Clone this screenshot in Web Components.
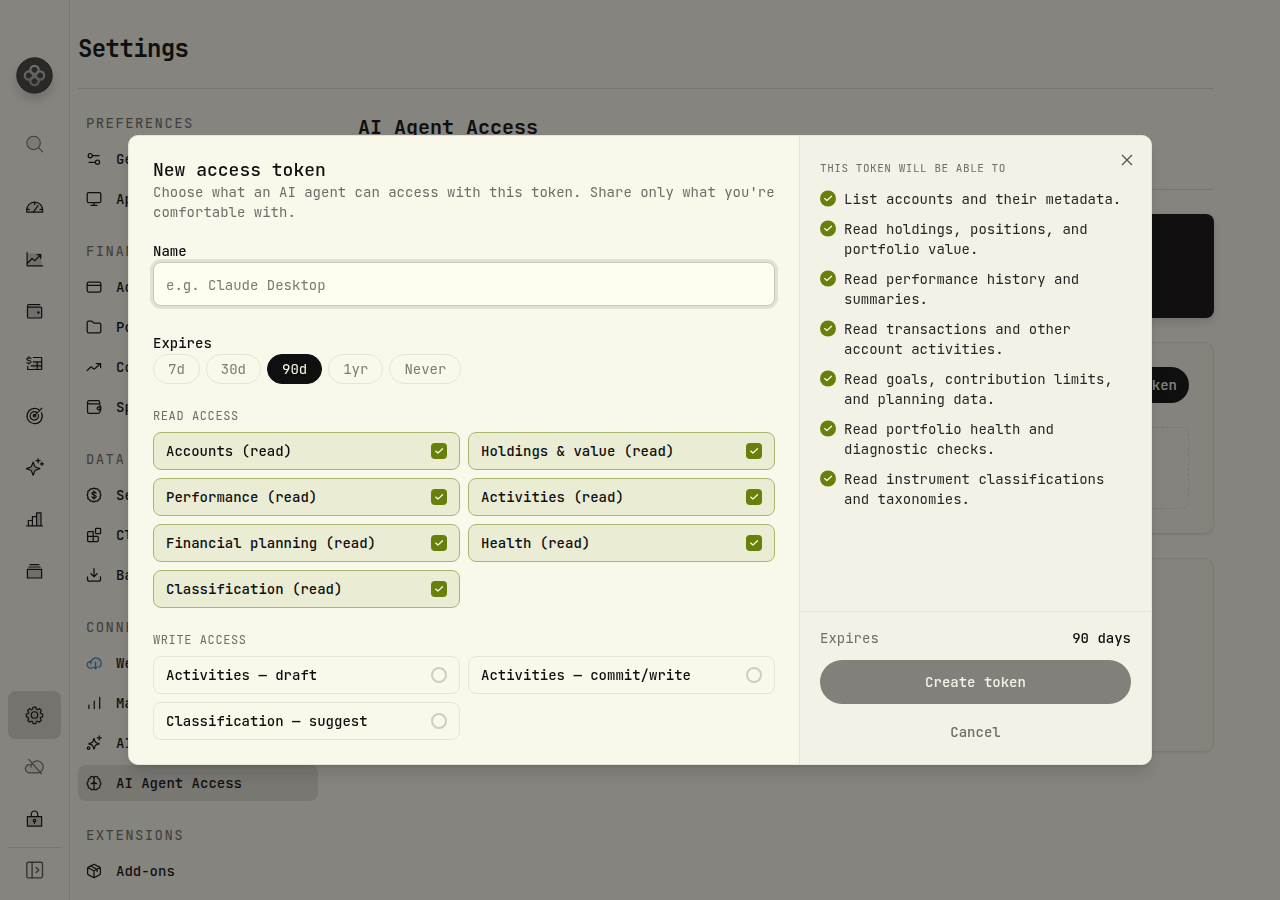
<!DOCTYPE html>
<html lang="en">
<head>
<meta charset="utf-8">
<title>Settings - AI Agent Access</title>
<style>
  :root {
    --page: #fbf8ef;
    --bg: #faf8eb;
    --panel: #f4f1e6;
    --input: #fffdf0;
    --ink: #100f0f;
    --muted: #6f6e69;
    --line: #e6e4d9;
    --green: #66800b;
  }

  html, body {
    margin: 0;
    height: 100%;
    overflow: hidden;
  }

  body {
    background: var(--page);
    color: var(--ink);
    font-family: "JetBrains Mono", "DejaVu Sans Mono", monospace;
    font-size: 14px;
    line-height: 20px;
  }
</style>
</head>
<body>
<settings-app></settings-app>

<template id="tpl-app">
  <style>
    :host { display: block; height: 100vh; }
    .shell { display: flex; height: 100%; }
    main { flex: 1; padding: 0 66px 0 8px; min-width: 0; }
    header { height: 88px; border-bottom: 1px solid #dcdacf; display: flex; align-items: center; }
    h1 { margin: 10px 0 0; font-size: 24px; line-height: 32px; font-weight: 600; letter-spacing: -0.6px; }
    .cols { display: flex; gap: 40px; padding-top: 24px; }
    section { flex: 1; display: flex; flex-direction: column; gap: 24px; }
    .head { height: 76px; border-bottom: 1px solid #dcdacf; }
    h2 { margin: 0; font-size: 20px; line-height: 28px; font-weight: 600; }
    .hero { height: 104px; border-radius: 8px; background: #120f10; box-shadow: 0 4px 8px rgba(16, 15, 15, .14); }
    .card {
      box-sizing: border-box; border: 1px solid #e4e1d6; border-radius: 10px; padding: 24px;
      background: linear-gradient(90deg, #fbf8ef 92%, #fbf5e9 100%);
      box-shadow: 0 1px 2px rgba(16, 15, 15, .1);
      display: flex; flex-direction: column; gap: 24px;
    }
    .tokens { height: 192px; }
    .clients { height: 194px; }
    .new {
      align-self: flex-end; height: 36px; border: 0; border-radius: 18px; padding: 0 12px; background: var(--ink);
      color: var(--bg); font: inherit; font-weight: 500; flex: none;
    }
    .empty { box-sizing: border-box; height: 82px; border: 1px dashed #dfdcd2; border-radius: 8px; }
  </style>
  <div class="shell">
    <app-rail></app-rail>
    <main>
      <header><h1>Settings</h1></header>
      <div class="cols">
        <settings-nav></settings-nav>
        <section>
          <div class="head"><h2>AI Agent Access</h2></div>
          <div class="hero"></div>
          <div class="card tokens">
            <button class="new">New token</button>
            <div class="empty"></div>
          </div>
          <div class="card clients"></div>
        </section>
      </div>
    </main>
  </div>
  <token-dialog></token-dialog>
</template>

<template id="tpl-rail">
  <style>
    :host {
      box-sizing: border-box; width: 70px; border-right: 1px solid #e0ded3; padding: 57px 8px 8px;
      display: flex; flex-direction: column; align-items: stretch;
    }
    .logo { height: 37px; width: 37px; align-self: center; border-radius: 50%; box-shadow: 0 6px 10px rgba(16, 15, 15, .16); }
    .logo svg { display: block; }
    .btn { height: 48px; display: flex; align-items: center; justify-content: center; border-radius: 8px; flex: none; }
    .search { margin-top: 26px; color: #6f6e69; }
    .list { display: flex; flex-direction: column; gap: 4px; margin-top: 16px; }
    .bottom { display: flex; flex-direction: column; gap: 4px; margin-top: auto; }
    .active { background: #d9d6cc; }
    .dim { color: #6f6e69; }
    .last { border-top: 1px solid #dad7cd; border-radius: 0; height: 44px; color: #5a5954; }
    ui-icon { transform: translateX(-.5px); }
    .list ui-icon { transform: translate(-.5px, -.5px); }
  </style>
  <div class="logo">
    <svg width="37" height="37" viewBox="0 0 37 37">
      <defs><linearGradient id="g" x1="0" y1="0" x2="0" y2="37" gradientUnits="userSpaceOnUse">
        <stop offset=".2" stop-color="#cfcfd3"/><stop offset=".8" stop-color="#99999c"/>
      </linearGradient></defs>
      <circle cx="18.5" cy="18.5" r="17.7" fill="#47433a" stroke="#302e28"/>
      <g fill="none" stroke="url(#g)" stroke-width="2.3">
        <circle cx="18.5" cy="13" r="4.2"/><circle cx="18.5" cy="24" r="4.2"/>
        <circle cx="13" cy="18.5" r="4.2"/><circle cx="24" cy="18.5" r="4.2"/>
      </g>
    </svg>
  </div>
  <div class="btn search"><ui-icon name="search" size="20"></ui-icon></div>
  <div class="list">
    <div class="btn"><ui-icon name="gauge" size="20"></ui-icon></div>
    <div class="btn"><ui-icon name="chart" size="20"></ui-icon></div>
    <div class="btn"><ui-icon name="wallet" size="20"></ui-icon></div>
    <div class="btn"><ui-icon name="invoice" size="20"></ui-icon></div>
    <div class="btn"><ui-icon name="target" size="20"></ui-icon></div>
    <div class="btn"><ui-icon name="sparkle" size="20"></ui-icon></div>
    <div class="btn"><ui-icon name="bars" size="20"></ui-icon></div>
    <div class="btn"><ui-icon name="stack" size="20"></ui-icon></div>
  </div>
  <div class="bottom">
    <div class="btn active"><ui-icon name="gear" size="20"></ui-icon></div>
    <div class="btn dim"><ui-icon name="cloudoff" size="20"></ui-icon></div>
    <div class="btn"><ui-icon name="lock" size="20"></ui-icon></div>
    <div class="btn last"><ui-icon name="panel" size="20"></ui-icon></div>
  </div>
</template>

<template id="tpl-nav">
  <style>
    :host { display: flex; flex-direction: column; gap: 24px; width: 240px; flex: none; }
  </style>
  <nav-group heading="PREFERENCES">
    <nav-item icon="sliders">General</nav-item>
    <nav-item icon="monitor">Appearance</nav-item>
  </nav-group>
  <nav-group heading="FINANCES">
    <nav-item icon="card">Accounts</nav-item>
    <nav-item icon="folder">Portfolios</nav-item>
    <nav-item icon="trend">Contributions</nav-item>
    <nav-item icon="purse">Spending</nav-item>
  </nav-group>
  <nav-group heading="DATA">
    <nav-item icon="coin">Securities</nav-item>
    <nav-item icon="blocks">Classifications</nav-item>
    <nav-item icon="download">Backup</nav-item>
  </nav-group>
  <nav-group heading="CONNECTIONS">
    <nav-item icon="clouddown">Wealthfolio</nav-item>
    <nav-item icon="signal">Market Data</nav-item>
    <nav-item icon="ai">AI Providers</nav-item>
    <nav-item icon="brain" active>AI Agent Access</nav-item>
  </nav-group>
  <nav-group heading="EXTENSIONS">
    <nav-item icon="box">Add-ons</nav-item>
  </nav-group>
</template>

<template id="tpl-dialog">
  <style>
    :host {
      position: fixed; inset: 0; background: rgba(16, 15, 15, .5);
      display: flex; align-items: center; justify-content: center;
    }
    .modal {
      box-sizing: border-box; width: 1024px; height: 630px; border: 1px solid var(--line); border-radius: 10px;
      background: var(--bg); overflow: hidden; display: flex;
      position: relative;
      box-shadow: 0 10px 15px -3px rgba(16, 15, 15, .13), 0 4px 6px -4px rgba(16, 15, 15, .13);
    }
    .form { box-sizing: border-box; width: 670px; padding: 25px 24px 24px; display: flex; flex-direction: column; }
    h2 { margin: 0; font-size: 18px; line-height: 18px; font-weight: 500; }
    .desc { margin: 3px 0 0; color: var(--muted); }
    label { margin-top: 19px; font-weight: 500; }
    input {
      box-sizing: border-box; height: 44px; margin-top: 1px; padding: 2px 12px 0; border: 1px solid #c9c7bc;
      border-radius: 8px; background: var(--input); font: inherit; color: var(--ink);
      outline: none; box-shadow: 0 0 0 3px #e2e1d5;
    }
    input::placeholder { color: #7b7a74; opacity: 1; }
    label.exp { margin-top: 27px; }
    .pills { display: flex; gap: 6px; margin-top: 1px; }
    h3 { margin: 24px 0 8px; font-size: 12px; line-height: 16px; font-weight: 400; letter-spacing: 0.6px; color: var(--muted); }
    .grid { display: grid; grid-template-columns: 1fr 1fr; gap: 8px; }
    aside {
      flex: 1; border-left: 1px solid var(--line); background: var(--panel);
      display: flex; flex-direction: column;
    }
    .can { flex: 1; padding: 24px 20px 0; display: flex; flex-direction: column; gap: 10px; }
    .can h4 { margin: 0 0 2px; font-size: 11px; line-height: 17px; font-weight: 400; letter-spacing: 0.55px; color: var(--muted); }
    footer { border-top: 1px solid var(--line); padding: 16px 20px 12px; display: flex; flex-direction: column; }
    .row { display: flex; justify-content: space-between; color: var(--muted); }
    .row b { font-weight: 500; color: var(--ink); }
    button { border: 0; font: inherit; font-weight: 500; }
    .create { margin-top: 12px; height: 44px; border-radius: 22px; background: #82807a; color: var(--panel); }
    .cancel { margin-top: 8px; height: 40px; background: none; color: var(--muted); }
    .close { position: absolute; top: 16px; right: 16px; color: #55544f; display: flex; }
  </style>
  <div class="modal" role="dialog">
    <div class="form">
      <h2>New access token</h2>
      <p class="desc">Choose what an AI agent can access with this token. Share only what you're comfortable with.</p>
      <label>Name</label>
      <input type="text" placeholder="e.g. Claude Desktop">
      <label class="exp">Expires</label>
      <div class="pills">
        <expiry-pill>7d</expiry-pill>
        <expiry-pill>30d</expiry-pill>
        <expiry-pill selected>90d</expiry-pill>
        <expiry-pill>1yr</expiry-pill>
        <expiry-pill>Never</expiry-pill>
      </div>
      <h3>READ ACCESS</h3>
      <div class="grid">
        <scope-option checked>Accounts (read)</scope-option>
        <scope-option checked>Holdings &amp; value (read)</scope-option>
        <scope-option checked>Performance (read)</scope-option>
        <scope-option checked>Activities (read)</scope-option>
        <scope-option checked>Financial planning (read)</scope-option>
        <scope-option checked>Health (read)</scope-option>
        <scope-option checked>Classification (read)</scope-option>
      </div>
      <h3>WRITE ACCESS</h3>
      <div class="grid">
        <scope-option>Activities — draft</scope-option>
        <scope-option>Activities — commit/write</scope-option>
        <scope-option>Classification — suggest</scope-option>
      </div>
    </div>
    <aside>
      <div class="can">
        <h4>THIS TOKEN WILL BE ABLE TO</h4>
        <ability-item>List accounts and their metadata.</ability-item>
        <ability-item>Read holdings, positions, and portfolio value.</ability-item>
        <ability-item>Read performance history and summaries.</ability-item>
        <ability-item>Read transactions and other account activities.</ability-item>
        <ability-item>Read goals, contribution limits, and planning data.</ability-item>
        <ability-item>Read portfolio health and diagnostic checks.</ability-item>
        <ability-item>Read instrument classifications and taxonomies.</ability-item>
      </div>
      <footer>
        <div class="row"><span>Expires</span><b>90 days</b></div>
        <button class="create">Create token</button>
        <button class="cancel">Cancel</button>
      </footer>
    </aside>
    <span class="close"><ui-icon name="close" size="16"></ui-icon></span>
  </div>
</template>

<script>
// 20px icons: thin two-tone strokes. 16px icons: plain strokes.
const ICONS = {
  search: `<g stroke-width="1.1"><circle cx="9.1" cy="8.9" r="6.7" fill="currentColor" fill-opacity=".14"/><path d="M13.9 13.7l4.2 4.2"/></g>`,
  gauge: `<path d="M2.2 14.6v-2a8 8 0 0 1 16 0v2z" fill="currentColor" fill-opacity=".1"/><path d="M9 14.4l4.6-6.2M10.2 4.6v2.6M2.6 11.6l2.3.6M17.8 11.6l-2.3.6"/>`,
  chart: `<path d="M3 4h14v12H3z" fill="currentColor" fill-opacity=".18" stroke="none"/><path d="M2.6 3v13.4H18M3.2 13.5L7.6 9l2.8 2.2L16 5.4M12.6 5.2h3.6v3.6"/>`,
  wallet: `<path d="M3 5.2h13.4c.5 0 .8.3.8.8v10c0 .5-.3.8-.8.8H3.8c-.5 0-.8-.3-.8-.8z" fill="currentColor" fill-opacity=".18" stroke="none"/><path d="M15.2 3.2H4.4c-.8 0-1.4.5-1.4 1.3v10.7c0 .8.5 1.3 1.3 1.3h11.9c.6 0 1-.4 1-1V6.7c0-.6-.4-1-1-1H4.3C3.5 5.7 3 5.3 3 4.5"/><circle cx="13.9" cy="11" r=".6" fill="currentColor"/>`,
  invoice: `<path d="M8 9h9v7H8z" fill="currentColor" fill-opacity=".12" stroke="none"/><path d="M8.8 4h8.4v12H3.2v-3.2M6.6 12.4h10.6M8.8 8.4h8.4M12.7 8.4V16M6.4 4.9C5.8 4.1 2.4 3.9 2.4 5.7c0 1.7 4.2.9 4.2 2.6 0 1.6-3.4 1.6-4.3.8M4.5 3.2v.9M4.5 9.6v.9"/>`,
  target: `<path d="M14.6 4.4a7.6 7.6 0 1 0 2.4 2.9M12.2 6.9a4.2 4.2 0 1 0 1.6 2.2"/><circle cx="10" cy="10.2" r="1.3"/><path d="M10 10.2L17.5 2.7"/>`,
  sparkle: `<path d="M8.6 4.6l1.7 4.1c.2.4.4.6.8.8l4.3 1.6-4.3 1.7c-.4.2-.6.4-.8.8l-1.7 4.2-1.6-4.2c-.2-.4-.4-.6-.8-.8L1.9 11.1l4.3-1.6c.4-.2.6-.4.8-.8z" fill="currentColor" fill-opacity=".15"/><path d="M13.6 1.2v4M11.6 3.2h4M17.4 4.9v3M15.9 6.4h3"/>`,
  bars: `<path d="M2.3 16.4h15.6M3.9 16.4v-5.4h4M7.9 16.4V7.2h4.2M12.1 16.4V3.3h4.4v13.1"/><path d="M12.1 3.3h4.4v13h-4.4z" fill="currentColor" fill-opacity=".18" stroke="none"/>`,
  stack: `<path d="M2.9 7.8h14.2v8.7H2.9z" fill="currentColor" fill-opacity=".18"/><path d="M4.3 5.5h11.4M5.5 3.2h9"/>`,
  gear: `<g transform="translate(10 10) scale(.96) translate(-10 -10)"><path d="M8.5 2.4h3l.5 2 1.3.6 1.9-1.1 2 2.1-1 1.8.5 1.3 1.8.6v2.8l-1.9.5-.5 1.3 1 1.8-2 2-1.9-1-1.3.6-.5 1.9h-2.9l-.5-1.9-1.3-.6-1.9 1-2-2 1-1.8-.5-1.3-1.8-.5V9.7l1.9-.6.5-1.3-1.1-1.8 2-2.1L6.7 5 8 4.4z" transform="translate(0 -.6)" fill="currentColor" fill-opacity=".12"/><circle cx="10" cy="10" r="3.4"/></g>`,
  cloudoff: `<g stroke-width="1.2"><path d="M6.9 8.3a6 6 0 1 1 5.6 7.6H5.3a4.2 4.2 0 1 1 1.8-7.9" fill="currentColor" fill-opacity=".08"/><path d="M6.5 10.2V8.6M4.3 2.3l12.7 14.5"/></g>`,
  lock: `<path d="M2.9 7.700h14.200v9.500H2.900z" fill="currentColor" fill-opacity=".18"/><path d="M6.800 7.500V5.200a3.200 3.200 0 0 1 6.400 0v2.300M10 12.800v1.800"/><circle cx="10" cy="11.600" r="1.300"/>`,
  panel: `<rect x="2.3" y="2.2" width="15.7" height="15.7" rx="1.7" stroke-width="1.4"/><path d="M7.600 2.200v15.700M11.600 7.500l2.700 2.500-2.700 2.500" stroke-width="1.4"/>`,
  close: `<path d="M3.300 3.300l9.400 9.400M12.700 3.300l-9.400 9.400"/>`,
  sliders: `<circle cx="4.3" cy="4.7" r="2.1"/><path d="M6.4 4.7H13M3 11.3h6.4"/><circle cx="11.5" cy="11.3" r="2.1"/>`,
  monitor: `<rect x="1.2" y="1.7" width="13.6" height="10" rx="1.5"/><path d="M8 11.7v2.6M5 14.4h6"/>`,
  card: `<rect x="1.2" y="3" width="13.6" height="10" rx="1.6"/><path d="M1.2 6.4h13.6"/>`,
  folder: `<path d="M1.2 12.4V3.6c0-.9.5-1.5 1.4-1.5h2.8c1.5 0 1.5 2 3 2h5c.9 0 1.4.6 1.4 1.5v6.8c0 .9-.5 1.5-1.4 1.5H2.6c-.9 0-1.4-.6-1.4-1.5z"/>`,
  trend: `<path d="M1.2 11.5l3-3c.7-.7 1.2-.7 1.9 0l1 1c.7.7 1.2.7 1.9 0L14.3 4.7M10.3 4.5h4.3v4.2"/>`,
  purse: `<path d="M13.6 5.3V3.1c0-.8-.5-1.4-1.3-1.4H3.3c-1.1 0-1.8.6-1.8 1.5 0 1.1.8 1.7 1.9 1.7h9c1.2 0 1.700.6 1.700 1.500v6.200c0 1.100-.6 1.700-1.700 1.700H3.500c-1.300 0-2-.7-2-1.900V3.300"/><path d="M14.800 7.900h-2.200a1.500 1.500 0 0 0 0 3h2.200z" fill="currentColor" fill-opacity=".2"/>`,
  coin: `<path d="M8 1.1l1.7.8 1.9-.1 1 1.6 1.6 1-.1 1.9.8 1.7-.8 1.7.1 1.9-1.6 1-1 1.6-1.9-.1-1.7.8-1.7-.8-1.9.1-1-1.6-1.6-1 .1-1.9L1.100 8l.8-1.700-.1-1.900 1.600-1 1-1.600 1.900.1z"/><path d="M10.100 6.200C9.700 4.900 5.900 4.700 5.900 6.500c0 2 4.300 1 4.300 3.100 0 1.900-3.900 1.800-4.300.2M8 3.900v8.200"/>`,
  blocks: `<path d="M1.600 5.600c0-.7.3-1 1-1h4.600v10H2.600c-.7 0-1-.3-1-1zM1.600 9.400h9.700c.7 0 1 .3 1 1v3.200c0 .7-.3 1-1 1H7.200"/><rect x="9.5" y="1.4" width="5.1" height="5.1" rx=".8"/>`,
  download: `<path d="M8 1.6v7.8M5 6.7l3 3 3-3M1.5 9.900v2.300c0 1.300.7 2 2 2h9c1.300 0 2-.7 2-2V9.900"/>`,
  clouddown: `<path d="M6.600 13.100H4.200a3.300 3.300 0 1 1 1-6.500M4.900 8.800a5.200 5.200 0 1 1 8.300 3.500" fill="#4385be" fill-opacity=".1"/><path d="M9.500 7v6.800M7.500 11.900l2 2 2-2"/>`,
  signal: `<path d="M2.900 10.200v3.300M8.300 6.100v7.400M13.700 2.300v11.200"/>`,
  ai: `<path d="M8 3.500l1.100 3c.2.600.6 1 1.200 1.200l2.900 1.100-2.900 1.100c-.6.200-1 .6-1.200 1.200L8 14.100l-1.100-3c-.2-.6-.6-1-1.200-1.200L2.800 8.800l2.900-1.100c.6-.2 1-.6 1.200-1.200zM13.300.9v4M11.300 2.900h4"/><circle cx="2.600" cy="13.100" r="1.300"/>`,
  brain: `<path d="M8 3v10.400M8 3.300C7.500.6 4 .9 4 3.400 2.300 3.800 1.700 5.300 2.300 6.700.7 7.400.7 9.400 2.200 10.300c-.4 1.800.5 3.100 2.200 3.100.6 2 3.200 1.900 3.600 0M8 3.300c.5-2.700 4-2.400 4 .1 1.700.4 2.300 1.900 1.700 3.300 1.600.7 1.600 2.700.1 3.600.4 1.800-.5 3.100-2.200 3.100-.6 2-3.200 1.900-3.600 0M5.300 8.700C6.800 8.600 7.700 7.800 8 6.300M10.700 8.700C9.200 8.600 8.300 7.800 8 6.300"/>`,
  box: `<path d="M8 1.200l5.500 2.900c.6.300.9.700.9 1.300v5.200c0 .6-.3 1-.9 1.300L8 14.800l-5.500-2.900c-.6-.3-.9-.7-.9-1.300V5.400c0-.6.300-1 .9-1.300zM1.900 4.700L8 7.800l6.100-3.100M8 7.800v6.900M4.700 3l6.400 3.300v2.300"/>`,
};

const CHECK = `<svg width="16" height="16" viewBox="0 0 16 16"><path d="M4.700 8.100l2.200 2 4.600-4.300" fill="none" stroke="#fffcf0" stroke-width="1.300" stroke-linecap="round" stroke-linejoin="round"/></svg>`;

class BaseElement extends HTMLElement {
  constructor() {
    super();
    this.attachShadow({ mode: "open" });
  }

  connectedCallback() {
    this.render();
  }
}

function fromTemplate(id) {
  return class extends BaseElement {
    render() {
      const template = document.getElementById(id);
      this.shadowRoot.replaceChildren(template.content.cloneNode(true));
    }
  };
}

class UiIcon extends BaseElement {
  render() {
    const size = this.getAttribute("size") || "16";
    const width = size === "20" ? 1.2 : 1.25;
    this.shadowRoot.innerHTML = `
      <style>
        :host { display: block; flex: none; width: ${size}px; height: ${size}px; }
        svg { display: block; overflow: visible; }
      </style>
      <svg width="${size}" height="${size}" viewBox="0 0 ${size} ${size}" fill="none" stroke="currentColor"
        stroke-width="${width}" stroke-linecap="round" stroke-linejoin="round">${ICONS[this.getAttribute("name")]}</svg>`;
  }
}

class NavGroup extends BaseElement {
  render() {
    this.shadowRoot.innerHTML = `
      <style>
        :host { display: flex; flex-direction: column; gap: 4px; }
        div { padding: 0 8px; margin-bottom: 4px; color: var(--muted); letter-spacing: 1.4px; }
      </style>
      <div>${this.getAttribute("heading")}</div>
      <slot></slot>`;
  }
}

class NavItem extends BaseElement {
  render() {
    const icon = this.getAttribute("icon");
    this.shadowRoot.innerHTML = `
      <style>
        :host {
          box-sizing: border-box; display: flex; align-items: center; gap: 14px; height: 36px;
          padding: 0 8px; border-radius: 8px; font-weight: 500; white-space: nowrap;
        }
        :host([active]) { background: #e1ded4; }
        ui-icon[name="clouddown"] { color: #4385be; }
      </style>
      <ui-icon name="${icon}"></ui-icon>
      <span><slot></slot></span>`;
  }
}

class ExpiryPill extends BaseElement {
  render() {
    this.shadowRoot.innerHTML = `
      <style>
        :host {
          box-sizing: border-box; display: block; height: 30px; line-height: 28px; padding: 0 14px;
          border: 1px solid var(--line); border-radius: 15px; color: #7b7a74;
        }
        :host([selected]) { background: var(--ink); border-color: var(--ink); color: var(--bg); }
      </style>
      <slot></slot>`;
  }
}

class ScopeOption extends BaseElement {
  render() {
    const checked = this.hasAttribute("checked");
    this.shadowRoot.innerHTML = `
      <style>
        :host {
          box-sizing: border-box; display: flex; align-items: center; justify-content: space-between;
          height: 38px; padding: 0 12px; border: 1px solid var(--line); border-radius: 8px; font-weight: 500;
        }
        :host([checked]) { border-color: #a8b66e; background: #eaecd4; }
        i { box-sizing: border-box; width: 16px; height: 16px; border: 2px solid #cecdc3; border-radius: 50%; }
        :host([checked]) i { border: 0; border-radius: 4px; background: var(--green); }
        svg { display: block; }
      </style>
      <span><slot></slot></span>
      <i>${checked ? CHECK : ""}</i>`;
  }
}

class AbilityItem extends BaseElement {
  render() {
    this.shadowRoot.innerHTML = `
      <style>
        :host { display: flex; gap: 8px; color: #282726; }
        i {
          flex: none; width: 16px; height: 16px; margin-top: 1px; border-radius: 50%; background: var(--green);
          transform: translateY(.5px);
        }
        svg { display: block; }
      </style>
      <i>${CHECK}</i>
      <span><slot></slot></span>`;
  }
}

customElements.define("ui-icon", UiIcon);
customElements.define("nav-group", NavGroup);
customElements.define("nav-item", NavItem);
customElements.define("expiry-pill", ExpiryPill);
customElements.define("scope-option", ScopeOption);
customElements.define("ability-item", AbilityItem);
customElements.define("app-rail", fromTemplate("tpl-rail"));
customElements.define("settings-nav", fromTemplate("tpl-nav"));
customElements.define("token-dialog", fromTemplate("tpl-dialog"));
customElements.define("settings-app", fromTemplate("tpl-app"));
</script>
</body>
</html>
